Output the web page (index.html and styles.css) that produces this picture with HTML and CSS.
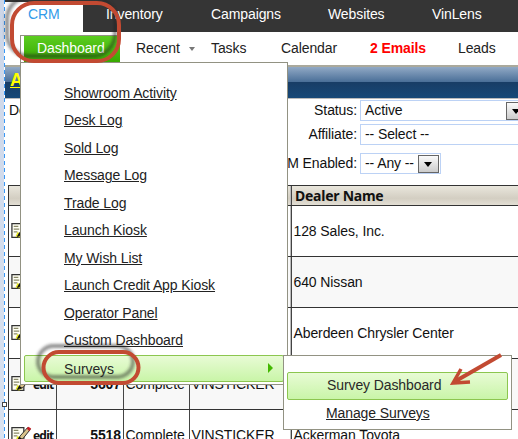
FILE: index.html
```html
<!DOCTYPE html>
<html lang="en">
<head>
<meta charset="utf-8">
<title>Dashboard</title>
<link rel="stylesheet" href="styles.css">
</head>
<body>
<svg class="defs" width="0" height="0" aria-hidden="true">
  <symbol id="edit" viewBox="0 0 24 20">
    <path d="M1 2h13v15H1z" fill="#fffff4" stroke="#333" stroke-width="1.4"/>
    <path d="M3 5h5M3 8h6M3 11h4" stroke="#8b8b6a" stroke-width="1.2"/>
    <path d="M5 16l2-5 6 3-4 3z" fill="#e5e51c"/>
    <path d="M7 16l3-5 8-9 3 2-8 10z" fill="#d9c28b" stroke="#222" stroke-width="1"/>
    <path d="M17 3l2-2 3 2-2 3z" fill="#c51d24"/>
    <path d="M7 16l2-4 3 2z" fill="#111"/>
  </symbol>
</svg>
<div class="window">
  <div class="gutter"></div>
  <main class="page">
    <nav class="topnav">
      <span class="tab active">CRM</span><span class="tab inventory">Inventory</span><span class="tab campaigns">Campaigns</span><span class="tab websites">Websites</span><span class="tab">VinLens</span>
    </nav>
    <nav class="subnav">
      <span class="dash">Dashboard</span><span class="recent">Recent</span><i class="caret"></i><span class="tasks">Tasks</span><span class="calendar">Calendar</span><b class="emails">2 Emails</b><span>Leads</span>
    </nav>
    <header class="banner"><a>A</a></header>
    <section class="filters">
      <div class="filter"><span class="lead">De</span><label>Status:</label><div class="select wide">Active<span class="drop"></span></div></div>
      <div class="filter"><label>Affiliate:</label><div class="select wide">-- Select --</div></div>
      <div class="filter third"><label>CRM Enabled:</label><div class="select any">-- Any --<span class="drop"></span></div></div>
    </section>
    <section class="table">
      <div class="row head"><span></span><span></span><span></span><span></span><span>Dealer Name</span></div>
      <div class="row"><span class="edit"><svg><use href="#edit"/></svg>edit</span><span></span><span></span><span></span><span>128 Sales, Inc.</span></div>
      <div class="row alt"><span class="edit"><svg><use href="#edit"/></svg>edit</span><span></span><span></span><span></span><span>640 Nissan</span></div>
      <div class="row"><span class="edit"><svg><use href="#edit"/></svg>edit</span><span></span><span></span><span></span><span>Aberdeen Chrysler Center</span></div>
      <div class="row alt"><span class="edit"><svg><use href="#edit"/></svg>edit</span><span class="num">5607</span><span>Complete</span><span>VINSTICKER</span><span></span></div>
      <div class="row"><span class="edit"><svg><use href="#edit"/></svg>edit</span><span class="num">5518</span><span>Complete</span><span>VINSTICKER</span><span>Ackerman Toyota</span></div>
    </section>
  </main>
</div>
<div class="menu">
  <a>Showroom Activity</a><a>Desk Log</a><a>Sold Log</a><a>Message Log</a><a>Trade Log</a><a>Launch Kiosk</a><a>My Wish List</a><a>Launch Credit App Kiosk</a><a>Operator Panel</a><a>Custom Dashboard</a>
  <div class="chosen">Surveys<i class="arrow"></i></div>
</div>
<div class="submenu"><div class="chosen">Survey Dashboard</div><a>Manage Surveys</a></div>
<i class="handle"></i>
<svg class="marks" viewBox="0 0 518 439" aria-hidden="true">
  <defs><filter id="blur" x="-20%" y="-20%" width="140%" height="140%"><feGaussianBlur stdDeviation="1.7"/></filter></defs>
  <g fill="none" stroke="#222" stroke-width="4" opacity=".5" filter="url(#blur)">
    <rect x="7" y="-3" width="108" height="59" rx="22"/>
    <rect x="38" y="346" width="95" height="31" rx="15.5"/>
  </g>
  <g fill="none" stroke="#c24a32" stroke-width="4">
    <rect x="12" y="3" width="107" height="58" rx="22"/>
    <rect x="43.500" y="352" width="95" height="31" rx="15.500"/>
    <path d="M501 355L454 382" stroke-width="4"/>
    <path d="M461 369L453 383L470 382" stroke-width="3.500"/>
  </g>
</svg>
</body>
</html>
```
FILE: styles.css
```css
* { box-sizing: border-box; }
body { margin: 0; width: 518px; height: 439px; overflow: hidden; position: relative; background: #fff; color: #111; font: 14px/16px "Liberation Sans", Arial, sans-serif; letter-spacing: -0.1px; }
.defs { position: absolute; }
.window { display: flex; height: 439px; }
.gutter { flex: 0 0 5px; background: repeating-linear-gradient(#3897f5 0 4px, #fff 4px 7px) right / 1px 100% no-repeat, linear-gradient(#ccd6e8, #d9e2f0); }
.page { flex: 0 0 513px; overflow: hidden; }
.topnav { display: flex; height: 32px; background: #353535; color: #fff; padding-top: 2px; }
.tab { line-height: 24px; white-space: nowrap; }
.active { width: 78px; height: 30px; background: #fff; color: #329be9; padding-left: 23px; margin-right: 23px; }
.inventory { width: 105px; }
.campaigns { width: 117px; }
.websites { width: 104px; }
.subnav { display: flex; height: 33px; padding: 3px 0 0 15px; line-height: 26px; color: #222; white-space: nowrap; }
.dash { width: 100px; height: 27px; border: solid #929283; border-width: 1px 0 0 1px; background: linear-gradient(90deg, #fff 3px, transparent 3px), linear-gradient(#5ccd20, #37a900); color: #fff; padding-left: 16px; line-height: 24px; margin-right: 16px; }
.recent { width: 53px; }
.caret { width: 0; height: 0; border: solid transparent; border-width: 4px 3.5px 0; border-top-color: #777; margin: 12px 16px 0 0; }
.tasks { width: 70px; }
.calendar { width: 89px; }
.emails { width: 88px; color: #f00; }
.banner { height: 34px; border-top: 2px solid #aaa99c; border-bottom: 1px solid #bbb; background: linear-gradient(#91a9c5, #4a6f98 48%, #183d66 50%, #174978); padding: 3px 5px; }
.banner a { color: #ff0; font-size: 18px; line-height: 20px; font-weight: bold; text-decoration: underline; }
.filters { height: 86px; padding-top: 1px; }
.filter { display: flex; height: 24px; line-height: 20px; }
.lead { flex: none; width: 30px; padding-left: 4px; margin-right: -30px; }
.filter label { flex: none; width: 352px; text-align: right; margin-right: 3px; }
.third { padding-top: 5px; height: 29px; }
.select { flex: none; position: relative; height: 21px; border: 1px solid #bcd2f5; padding-left: 4px; line-height: 19px; background: #fff; white-space: nowrap; }
.wide { width: 170px; }
.any { width: 81px; }
.drop { position: absolute; top: 1px; right: 1px; width: 21px; height: 18px; border: 1px solid #666; background: linear-gradient(#fafafa, #ccc); }
.wide .drop { right: 2px; }
.drop::after { content: ""; position: absolute; left: 5px; top: 6px; border: solid transparent; border-width: 5px 4.5px 0; border-top-color: #000; }
.table { width: 510px; margin-left: 3px; border: 1px solid #333; border-right: 0; }
.row { display: grid; grid-template-columns: 48px 67px 66px 102px 1fr; height: 51px; border-bottom: 1px solid #333; line-height: 51px; background: #fff; }
.row > span { border-right: 1px solid #444; padding-left: 1.5px; white-space: nowrap; overflow: hidden; }
.row > span:last-child { border-right: 0; }
.row > span:nth-child(4) { box-shadow: inset -1px 0 #bbb; }
.row.head { height: 20px; background: linear-gradient(#e9e6dc, #d3cec2 65%, #e3dfd4); }
.head > span:last-child { font: bold 14px/20px "Noto Sans", sans-serif; letter-spacing: -0.25px; padding-left: 3px; }
.alt { background: #f8f8f8; }
.row .edit { display: flex; align-items: center; padding-left: 2px; font: bold 12px/51px "Noto Sans", sans-serif; letter-spacing: -0.8px; }
.edit svg { flex: 0 0 22px; height: 20px; }
.row .num { text-align: right; padding-right: 2px; font-weight: bold; }
.menu, .submenu { position: absolute; background: #fff; border: 1px solid #929283; }
.menu { left: 20px; top: 62px; width: 268px; height: 323px; padding: 17px 3px 0; }
.menu a { display: block; height: 27.450px; line-height: 27px; padding-left: 40px; text-decoration: underline; color: #222; white-space: nowrap; }
.chosen { border: 1px solid #8cc64f; border-radius: 2px; background: linear-gradient(#e8fbd5, #c9f5a8); color: #292929; }
.menu .chosen { position: relative; height: 27px; margin-top: .5px; line-height: 26px; padding-left: 39px; }
.arrow { position: absolute; right: 10px; top: 7px; border: solid transparent; border-width: 5px 0 5px 5px; border-left-color: #43b800; }
.submenu { left: 283px; top: 355px; width: 229px; height: 75px; padding: 16px 3px 0; }
.submenu .chosen { height: 28px; line-height: 25px; padding-left: 39px; }
.submenu a { display: block; padding-left: 39px; line-height: 27px; text-decoration: underline; color: #222; }
.handle { position: absolute; left: 2px; top: 402px; width: 5px; height: 5px; border: 1px solid #444; background: #fff; }
.marks { position: absolute; inset: 0; width: 518px; height: 439px; pointer-events: none; }
```
